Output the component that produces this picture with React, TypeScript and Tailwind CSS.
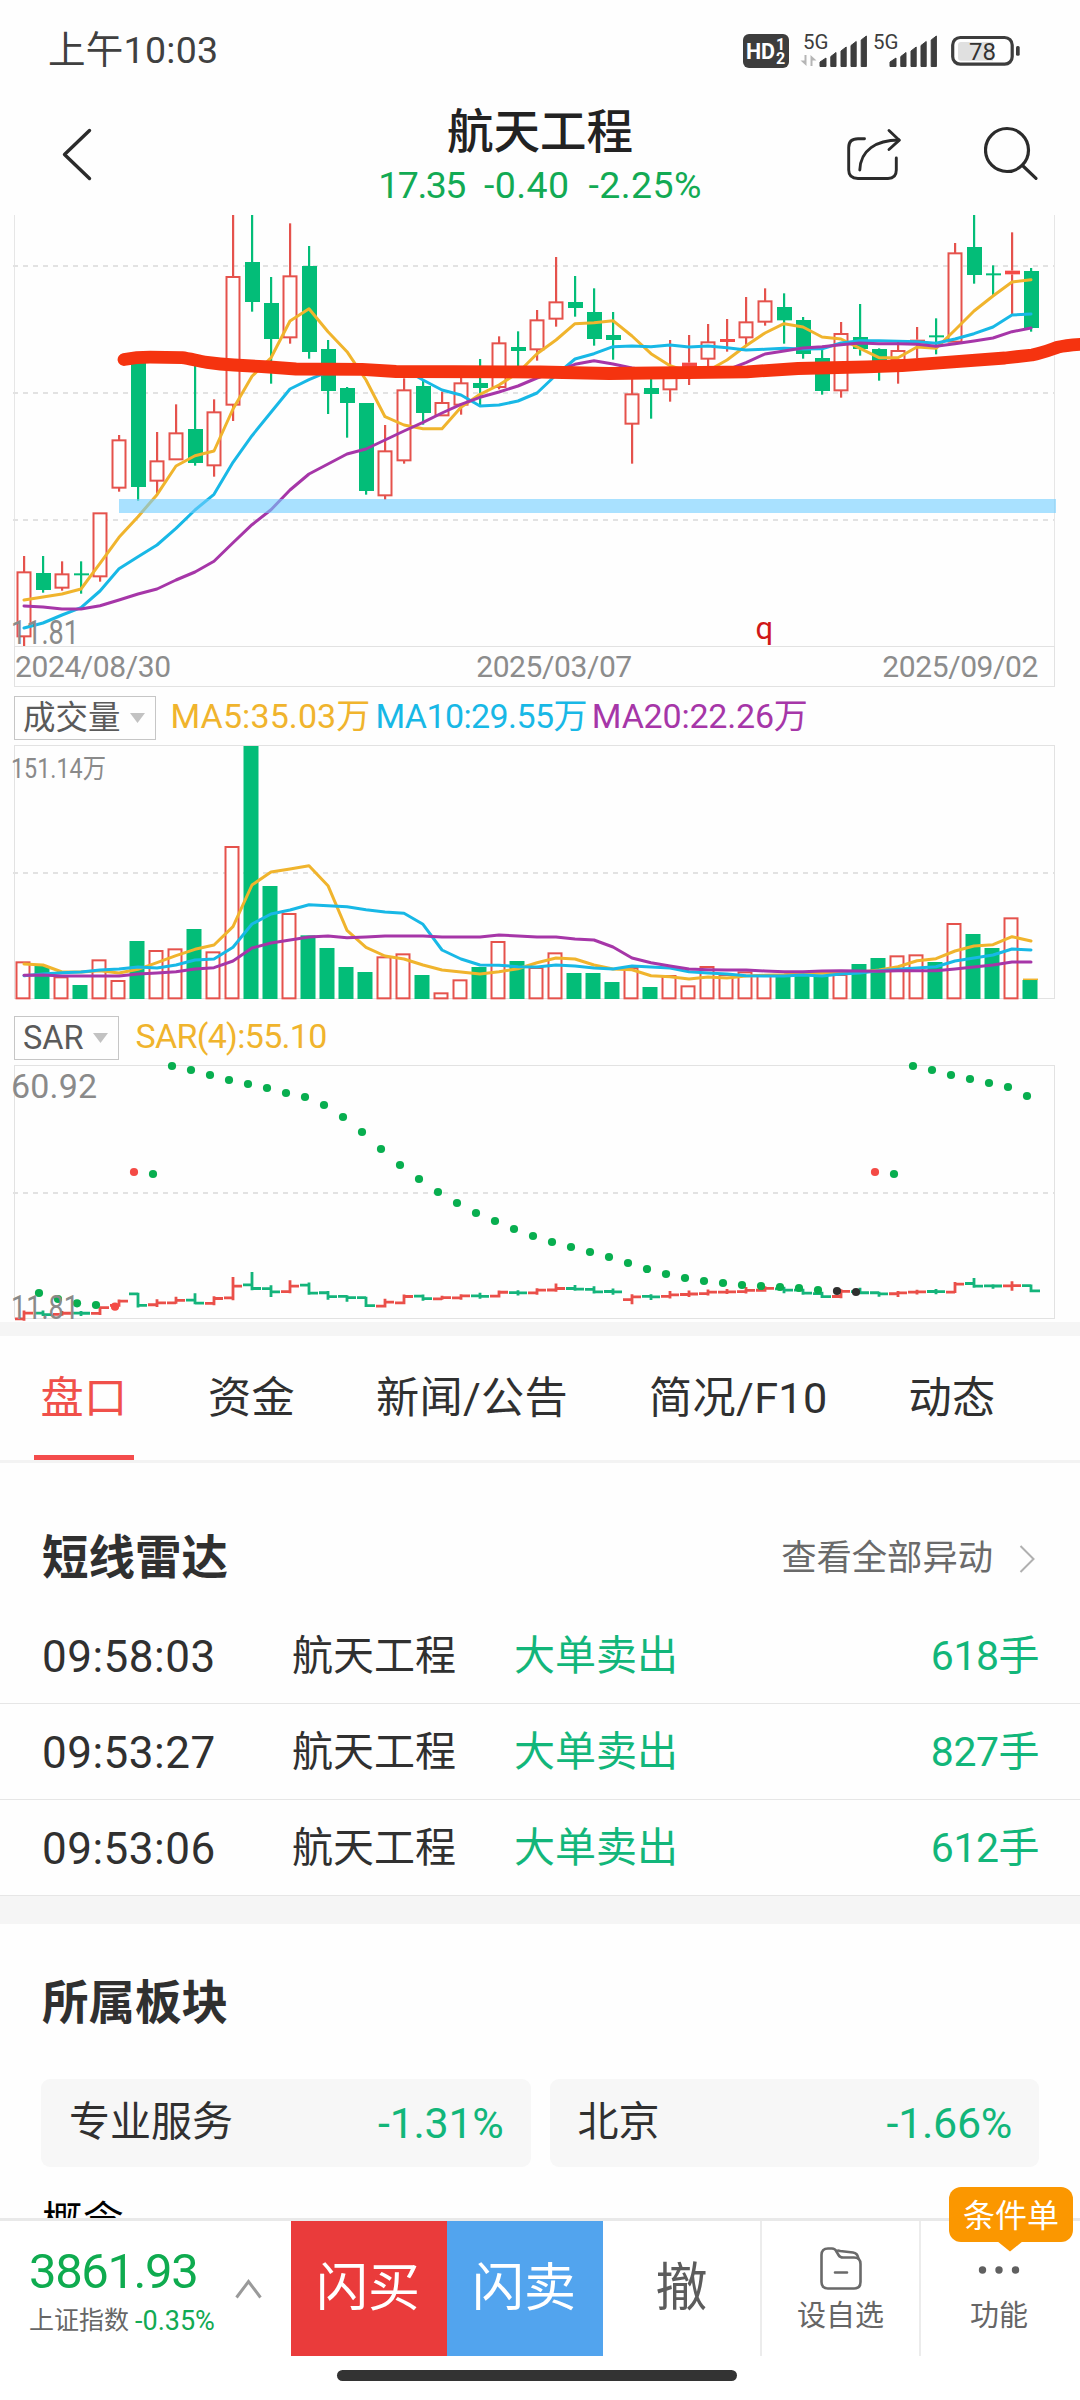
type Dir = "u" | "d";
type Candle = [Dir, number, number, number, number];

const UP = "#e5524c";
const DOWN = "#03bd78";
const YELLOW = "#f0b42d";
const BLUE = "#18b8e6";
const PURPLE = "#a636a8";

const STEP = 19;
const cx = (i: number) => 24 + STEP * i;

// chart values are stored in thirds of a pixel
const py = (v: number) => v / 3;

// direction, high, body top, body bottom, low
const candles: Candle[] = [
  ["u", 1053, 1102, 1294, 1325], ["d", 1053, 1104, 1155, 1163], ["u", 1069, 1108, 1148, 1157],
  ["d", 1069, 1105, 1109, 1166], ["u", 925, 925, 1114, 1130], ["u", 690, 706, 848, 860],
  ["d", 465, 470, 846, 887], ["u", 681, 769, 827, 865], ["u", 598, 685, 763, 763],
  ["d", 480, 672, 774, 782], ["u", 583, 622, 781, 815], ["u", -55, 216, 599, 648],
  ["d", -220, 171, 291, 320], ["d", 216, 294, 402, 536], ["u", 55, 214, 397, 416],
  ["d", 123, 183, 441, 461], ["d", 405, 432, 558, 627], ["d", 546, 549, 594, 698],
  ["d", 594, 594, 858, 869], ["u", 660, 739, 871, 884], ["u", 520, 556, 766, 776],
  ["d", 525, 543, 624, 659], ["u", 560, 594, 631, 631], ["u", 515, 535, 599, 629],
  ["d", 462, 534, 549, 600], ["u", 394, 415, 546, 553], ["d", 379, 426, 438, 490],
  ["u", 315, 346, 433, 467], ["u", 156, 292, 341, 365], ["d", 213, 291, 309, 335],
  ["d", 250, 321, 402, 422], ["d", 321, 390, 405, 464], ["u", 515, 568, 656, 776],
  ["d", 515, 549, 567, 641], ["u", 405, 500, 553, 590], ["u", 390, 473, 490, 540],
  ["u", 357, 412, 461, 490], ["u", 342, 402, 411, 440], ["u", 276, 352, 397, 420],
  ["u", 250, 289, 350, 362], ["d", 265, 306, 346, 416], ["d", 336, 345, 447, 461],
  ["d", 433, 459, 558, 569], ["u", 351, 387, 556, 578], ["d", 297, 396, 432, 452],
  ["d", 430, 432, 470, 527], ["u", 405, 438, 465, 536], ["u", 366, 404, 410, 460],
  ["d", 340, 391, 395, 448], ["u", 114, 145, 410, 410], ["d", -22, 126, 210, 236],
  ["d", 181, 205, 209, 270], ["u", 82, 197, 208, 330], ["d", 189, 198, 369, 380],
];

const ma5 = [
  1185, 1176, 1167, 1152, 1075, 997, 935, 869, 783, 752, 738, 612, 514, 458, 348, 311, 380, 440,
  525, 635, 660, 671, 671, 607, 568, 540, 503, 446, 405, 356, 353, 347, 393, 446, 482, 500, 497,
  465, 422, 384, 356, 366, 396, 402, 430, 458, 458, 426, 430, 375, 318, 273, 231, 224,
];
const ma10 = [
  1269, 1254, 1230, 1208, 1158, 1091, 1055, 1020, 970, 915, 868, 772, 692, 622, 552, 524, 500, 492,
  484, 485, 492, 525, 555, 570, 603, 600, 588, 564, 510, 462, 446, 425, 423, 425, 420, 426, 423,
  428, 435, 433, 430, 432, 431, 414, 407, 407, 409, 410, 415, 402, 386, 366, 330, 327,
];
const ma20 = [
  1203, 1206, 1212, 1212, 1202, 1185, 1167, 1152, 1125, 1101, 1069, 1013, 959, 914, 855, 807, 777,
  747, 732, 705, 678, 652, 624, 598, 577, 561, 543, 519, 500, 478, 467, 477, 489, 497, 503, 505,
  503, 495, 473, 447, 438, 429, 425, 419, 414, 416, 416, 418, 424, 416, 408, 399, 380, 369,
];

const volumes = [
  667, 678, 712, 735, 661, 723, 603, 633, 628, 567, 637, 321, 18, 438, 522, 586, 624, 681, 696, 652,
  643, 705, 760, 721, 681, 606, 663, 684, 640, 699, 699, 726, 684, 741, 708, 739, 681, 705, 697, 705,
  708, 708, 708, 705, 672, 654, 649, 646, 666, 552, 582, 624, 535, 720,
];
const vma5 = [
  672, 675, 696, 696, 692, 699, 688, 668, 647, 628, 615, 560, 435, 396, 387, 377, 437, 571, 622,
  648, 657, 675, 690, 696, 702, 695, 686, 668, 654, 657, 675, 687, 689, 707, 710, 717, 711, 714,
  708, 706, 704, 700, 700, 697, 697, 690, 680, 662, 656, 633, 618, 614, 590, 603,
];
const vma10 = [
  707, 702, 698, 696, 690, 687, 681, 684, 675, 660, 657, 622, 552, 522, 510, 494, 497, 500, 509,
  516, 520, 553, 630, 657, 675, 676, 680, 681, 675, 678, 684, 687, 678, 681, 684, 695, 699, 702,
  707, 708, 708, 705, 708, 702, 699, 692, 688, 684, 680, 663, 654, 645, 627, 630,
];
const vma20 = [
  706, 705, 708, 708, 708, 708, 702, 699, 695, 687, 683, 663, 624, 609, 600, 591, 588, 593, 591,
  588, 588, 588, 591, 591, 591, 585, 588, 591, 591, 597, 600, 621, 654, 668, 678, 687, 689, 690,
  690, 693, 695, 695, 693, 692, 693, 694, 692, 692, 692, 687, 681, 675, 666, 666,
];

const sar = [
  849, 867, 880, 885, 890, 486, 492, 168, 180, 195, 210, 222, 234, 249, 261, 285, 321, 366, 417,
  465, 507, 546, 579, 609, 633, 657, 678, 696, 711, 726, 741, 759, 777, 792, 804, 813, 819, 825,
  828, 831, 834, 840, 843, 846, 486, 492, 168, 180, 195, 207, 219, 231, 258,
];

const sarColor = (i: number) => {
  if (i === 5 || i === 6 || i === 45) return "#f44a45";
  if (i === 43 || i === 44) return "#2f2f2f";
  return "#08ae4f";
};

const line = (vals: number[]) => vals.map((v, i) => `${cx(i)},${py(v).toFixed(1)}`).join(" ");

function Averages({ sets }: { sets: number[][] }) {
  const colors = [YELLOW, BLUE, PURPLE];
  return (
    <g fill="none" strokeWidth="3" strokeLinejoin="round" strokeLinecap="round">
      {sets.map((s, i) => (
        <polyline key={i} points={line(s)} stroke={colors[i]} />
      ))}
    </g>
  );
}

function Dashed({ y }: { y: number }) {
  return <line x1="13" x2="1054" y1={y} y2={y} stroke="#e2e2e2" strokeWidth="2" strokeDasharray="5 5" />;
}

function PriceChart() {
  return (
    <svg className="block overflow-visible w-[1080px] h-[441px] shrink-0" viewBox="0 0 1080 441">
      <defs>
        <clipPath id="price-area">
          <rect x="0" y="10" width="1080" height="432" />
        </clipPath>
      </defs>
      <path d="M14.5 10V441M1054.5 10V441" stroke="#e6e6e6" />
      <Dashed y={61} />
      <Dashed y={188} />
      <Dashed y={315} />
      <g clipPath="url(#price-area)">
        {candles.map(([dir, hi, top, bot, lo], i) => {
          const x = cx(i);
          if (dir === "d") {
            return (
              <g key={i} fill={DOWN}>
                <rect x={x - 1} y={py(hi)} width="2.2" height={py(lo - hi)} />
                <rect x={x - 7} y={py(top)} width="15" height={Math.max(2, py(bot - top))} />
              </g>
            );
          }
          const small = bot - top < 18;
          return (
            <g key={i}>
              <rect x={x - 1} y={py(hi)} width="2.2" height={py(top - hi)} fill={UP} />
              <rect x={x - 1} y={py(bot)} width="2.2" height={py(lo - bot)} fill={UP} />
              {small ? (
                <rect x={x - 7} y={py(top)} width="15" height={py(bot - top)} fill="#f44a45" />
              ) : (
                <rect x={x - 6.5} y={py(top)} width="13" height={py(bot - top)} fill="#fff" stroke={UP} strokeWidth="2" />
              )}
            </g>
          );
        })}
      </g>
      <Averages sets={[ma5, ma10, ma20]} />
      <rect x="119" y="294" width="937" height="14" fill="#70cdff" opacity="0.6" />
      <path
        d="M124 154.5C132 153 142 152.2 150 152.2L182 152.6C190 153.5 198 156 207 157.3C216 158.6 225 159.5 234 160L269 162L296 164L362 164.3L396 166.5L540 167L609 168.5L747 166.8L798 163.5L867 161.8L902 160.7L953 156.8L1005 153L1032 150C1043 148 1051 144.5 1058 142.2C1066 140 1074 139.6 1086 139"
        fill="none"
        stroke="#f5330f"
        strokeWidth="12.8"
        strokeLinecap="round"
        strokeLinejoin="round"
      />
      <text x="11" y="439" fill="#8a8a8a" fontSize="33" textLength="68" lengthAdjust="spacingAndGlyphs">11.81</text>
      <text x="755.500" y="434" fill="#d01818" fontSize="31">q</text>
    </svg>
  );
}

function VolumeChart() {
  return (
    <svg className="block w-[1080px] h-[261px] shrink-0" viewBox="0 0 1080 261">
      <rect x="14.5" y="5.5" width="1040" height="253" fill="none" stroke="#e2e2e2" />
      <Dashed y={133} />
      {volumes.map((top, i) => {
        const x = cx(i);
        return candles[i][0] === "d" ? (
          <rect key={i} x={x - 8.5} y={py(top)} width="15" height={py(777 - top)} fill={DOWN} />
        ) : (
          <rect key={i} x={x - 7.5} y={py(top)} width="13" height={py(775 - top)} fill="#fff" stroke={UP} strokeWidth="2" />
        );
      })}
      <path d="M1023 239.3h15" stroke={YELLOW} strokeWidth="1.5" />
      <Averages sets={[vma5, vma10, vma20]} />
      <text x="11" y="37.5" fill="#8a8a8a" fontSize="27" textLength="95" lengthAdjust="spacingAndGlyphs">151.14万</text>
    </svg>
  );
}

function SarChart() {
  // price panel scale squeezed into the indicator's range
  const sy = (v: number) => py(827 + (v - 198) / 11);
  return (
    <svg className="block overflow-visible w-[1080px] h-[262px] shrink-0" viewBox="0 50 1080 262">
      <rect x="14.5" y="55.5" width="1040" height="253" fill="none" stroke="#e2e2e2" />
      <Dashed y={183} />
      {candles.map(([dir, hi, top, bot, lo], i) => {
        const open = sy(dir === "u" ? bot : top);
        const close = sy(dir === "u" ? top : bot);
        const x = cx(i);
        return (
          <path
            key={i}
            d={`M${x - 9} ${open}H${x}M${x} ${close}H${x + 9}M${x} ${sy(hi) - 1}V${sy(lo) + 1}`}
            stroke={dir === "u" ? "#ea4f49" : "#14b47b"}
            strokeWidth="2.8"
          />
        );
      })}
      {sar.map((v, i) => (
        <circle key={i} cx={39 + STEP * i} cy={py(v)} r="4.1" fill={sarColor(i + 1)} />
      ))}
      <text x="11" y="88" fill="#8a8a8a" fontSize="34" textLength="86">60.92</text>
      <text x="11" y="309" fill="#8a8a8a" fontSize="33" textLength="68" lengthAdjust="spacingAndGlyphs">11.81</text>
    </svg>
  );
}

const signalBars = [
  { x: 0, w: 7, h: 9 },
  { x: 10.8, w: 6.2, h: 14.5 },
  { x: 21, w: 6.2, h: 20 },
  { x: 31, w: 6.2, h: 25.5 },
  { x: 41.2, w: 6.2, h: 31 },
];

function Signal() {
  return (
    <g fill="#3d3d3d" stroke="#3d3d3d" strokeLinejoin="round">
      {signalBars.map(({ x, w, h }) => (
        <path key={x} d={`M${x + 0.5} 31V${31 - h + 4.5}L${x + w - 0.5} ${31 - h + 0.5}V31z`} />
      ))}
    </g>
  );
}

function StatusBar() {
  return (
    <div className="h-[102px] shrink-0 flex items-center justify-between pl-[48px] pr-[59px] text-[#404040]">
      <span className="text-[37.5px] leading-none tracking-[0.3px]">上午10:03</span>
      <svg className="overflow-visible w-[278px] h-[36px]" viewBox="743 33 278 36" fontFamily="Roboto">
        <rect x="743" y="34" width="46" height="34" rx="6" fill="#3d3d3d" />
        <text x="746" y="58.5" fill="#fff" fontSize="21.500" fontWeight="700" textLength="29">HD</text>
        <text x="776" y="50" fill="#fff" fontSize="16" fontWeight="700">1</text>
        <text x="776" y="64" fill="#fff" fontSize="16" fontWeight="700">2</text>
        <text x="803" y="49" fill="#3d3d3d" fontSize="20.5">5G</text>
        <path d="M806.500 55v11l-6-5.500h4V55zM810.500 66V55l6 5.500h-4V66z" fill="#b5b5b5" />
        <g transform="translate(819.5 35.5)"><Signal /></g>
        <text x="873" y="49" fill="#3d3d3d" fontSize="20.5">5G</text>
        <g transform="translate(889.5 35.5)"><Signal /></g>
        <rect x="952.7" y="37.500" width="59.500" height="26.700" rx="7.500" fill="#fff" stroke="#3d3d3d" strokeWidth="3.200" />
        <path d="M961 42H993V60.700H961a3 3 0 0 1-3-3V45a3 3 0 0 1 3-3z" fill="#e0e0e0" />
        <text x="982.500" y="60" fill="#333" fontSize="24" textAnchor="middle">78</text>
        <rect x="1016" y="46" width="3.700" height="9.700" rx="1.500" fill="#3d3d3d" />
      </svg>
    </div>
  );
}

function Header() {
  return (
    <header className="h-[103px] shrink-0 grid grid-cols-[1fr_auto_1fr] items-start">
      <svg className="ml-[60px] mt-[24px] w-[34px] h-[56px]" viewBox="60 126 34 56" fill="none" stroke="#2b2b2b" strokeWidth="3.4" strokeLinecap="round" strokeLinejoin="round">
        <path d="M89.5 130.500L64.500 154.500L89.500 178.500" />
      </svg>
      <div className="text-center">
        <h1 className="text-[46.5px] leading-[60px] font-medium text-[#222]">航天工程</h1>
        <div className="flex justify-center gap-[19px] text-[37.5px] leading-[46px] text-[#12aa54]">
          <span className="tracking-[-1.5px]">17.35</span>
          <span className="tracking-[0.4px]">-0.40</span>
          <span className="tracking-[0.4px]">-2.25%</span>
        </div>
      </div>
      <div className="flex justify-end gap-[82px] pr-[40px] pt-[24px]">
        <svg className="w-[56px] h-[56px]" viewBox="846 126 56 56" fill="none" stroke="#2b2b2b" strokeWidth="2.900" strokeLinecap="round" strokeLinejoin="round">
          <path d="M864.500 138.700H858Q848.700 138.700 848.700 147.500V170Q848.700 178.500 858 178.500H888Q896.300 178.500 896.300 170V158" />
          <path d="M859.800 170C860.500 150 876 140.200 899 140" />
          <path d="M889 130.500L899.300 140.200L889 149.500" />
        </svg>
        <svg className="w-[56px] h-[56px]" viewBox="984 126 56 56" fill="none" stroke="#2b2b2b" strokeWidth="3.200" strokeLinecap="round">
          <circle cx="1007" cy="150" r="21.500" />
          <path d="M1022.500 165.500L1036 178.300" />
        </svg>
      </div>
    </header>
  );
}

function Picker({ label }: { label: string }) {
  return (
    <div className="h-[44px] flex items-center gap-[9px] border border-[#c6c6c6] pl-[8px] pr-[10px] text-[#5a5a5a]">
      <span className="text-[32.5px] leading-[40px]">{label}</span>
      <svg className="w-[15px] h-[10px]" viewBox="0 0 15 10">
        <path d="M0 0H15L7.500 10z" fill="#c2c2c2" />
      </svg>
    </div>
  );
}

const tabs = ["盘口", "资金", "新闻/公告", "简况/F10", "动态"];

const radar = [
  { time: "09:58:03", lots: "618手" },
  { time: "09:53:27", lots: "827手" },
  { time: "09:53:06", lots: "612手" },
];

const sectors = [
  { name: "专业服务", change: "-1.31%" },
  { name: "北京", change: "-1.66%" },
];

function BottomBar() {
  return (
    <footer className="h-[182px] shrink-0 bg-white border-t-[3px] border-[#e9e9e9]">
      <div className="flex h-[135px]">
        <div className="w-[291px] flex items-center justify-between pl-[29px] pr-[29px]">
          <div className="pt-[8px] whitespace-nowrap">
            <div className="text-[49px] leading-[54px] tracking-[-1.4px] text-[#0fab4f]">3861.93</div>
            <div className="flex gap-[6px] text-[25px] leading-[38px] mt-[3px]">
              <span className="text-[#666]">上证指数</span>
              <span className="text-[#12aa54] text-[27px]">-0.35%</span>
            </div>
          </div>
          <svg className="-ml-[10px] w-[27px] h-[20px] shrink-0" viewBox="0 0 27 20" fill="none" stroke="#9a9a9a" strokeWidth="3">
            <path d="M1.500 18.500L13.500 2.500L25.500 18.500" />
          </svg>
        </div>
        <button className="w-[156px] bg-[#ea3b3b] text-white text-[52px] pr-[2px]">闪买</button>
        <button className="w-[156px] bg-[#52a4ee] text-white text-[52px] pr-[2px]">闪卖</button>
        <button className="w-[159px] border-r-2 border-[#ececec] text-[#5c5c5c] text-[52px]">撤</button>
        <div className="w-[159px] border-r-2 border-[#ececec] flex flex-col items-center pt-[26px] text-[#666]">
          <svg className="w-[42px] h-[43px]" viewBox="0 0 42 43" fill="none" stroke="#6a6a6a" strokeWidth="2.600" strokeLinejoin="round" strokeLinecap="round">
            <path d="M1.500 8Q1.500 1.500 8 1.500H12Q15 1.500 16.500 4.500L18.500 8Q20 10.500 23 10.500H34Q40.500 10.500 40.500 17V35Q40.500 41.500 34 41.500H8Q1.500 41.500 1.500 35z" />
            <path d="M16.500 4.500Q17.500 2.800 20 4L33 5.500Q37.500 6 38.500 11.500M15 25.500H27" />
          </svg>
          <span className="text-[29px] leading-[36px] mt-[8px]">设自选</span>
        </div>
        <div className="relative flex-1 flex flex-col items-center pt-[44px] pr-[3px] text-[#666]">
          <svg className="w-[42px] h-[10px]" viewBox="0 0 42 10" fill="#606060">
            <circle cx="4.500" cy="5" r="3.700" />
            <circle cx="21" cy="5" r="3.700" />
            <circle cx="37.500" cy="5" r="3.700" />
          </svg>
          <span className="text-[29px] leading-[36px] mt-[23px]">功能</span>
          <div className="absolute left-[28px] -top-[34px] w-[124px] h-[55px] rounded-[12px] bg-[#fb9700] text-white text-[32px] leading-[58px] text-center">
            条件单
            <svg className="absolute left-[48px] top-[54px] w-[26px] h-[11px]" viewBox="0 0 26 11">
              <path d="M0 0H26L13 10.500z" fill="#fb9700" />
            </svg>
          </div>
        </div>
      </div>
      <div className="mx-auto mt-[14px] w-[400px] h-[11px] -translate-x-[3px] rounded-full bg-[#333]" />
    </footer>
  );
}

export default function App() {
  return (
    <div className="w-[1080px] h-[2400px] flex flex-col overflow-hidden bg-[#fefefe] font-[Roboto,'Noto_Sans_CJK_SC',sans-serif]">
      <StatusBar />
      <Header />
      <PriceChart />

      <div className="mx-[14px] w-[1041px] h-[41px] shrink-0 flex items-center justify-between border border-[#e2e2e2] pr-[16px] text-[30px] leading-[38px] tracking-[-0.4px] text-[#8c8c8c]">
        <span>2024/08/30</span>
        <span className="ml-[55px]">2025/03/07</span>
        <span>2025/09/02</span>
      </div>
      <div className="h-[53px] shrink-0 flex items-end pl-[14px]">
        <Picker label="成交量" />
        <div className="flex items-center gap-[5px] h-[48px] ml-[15px] text-[34px] tracking-[0.1px]">
          <span className="text-[#f0b42d]">MA5:35.03万</span>
          <span className="text-[#18b8e6] tracking-[-0.6px]">MA10:29.55万</span>
          <span className="text-[#a636a8] tracking-[-0.2px]">MA20:22.26万</span>
        </div>
      </div>
      <VolumeChart />

      <div className="h-[59px] shrink-0 flex items-end pl-[14px]">
        <Picker label="SAR" />
        <span className="ml-[17px] text-[34px] leading-[47px] tracking-[-0.7px] text-[#f0b42d]">SAR(4):55.10</span>
      </div>
      <SarChart />

      <div className="h-[14px] shrink-0 bg-[#f5f5f5]" />
      <nav className="h-[127px] shrink-0 flex border-b-[3px] border-[#f3f3f3] pl-[34px] text-[43.2px] leading-[125px] tracking-[0.3px] text-[#303030]">
        {tabs.map((tab, i) => (
          <div
            key={tab}
            className={
              i === 0
                ? "mr-[68px] px-[6.5px] border-b-[5px] border-[#f44c4c] text-[#f0504a]"
                : "mr-[69px] px-[6px]"
            }
          >
            {tab}
          </div>
        ))}
      </nav>

      <section className="shrink-0">
        <div className="h-[145px] flex items-center justify-between pl-[42px] pr-[45px] pt-[46px]">
          <h2 className="text-[46.5px] leading-[99px] font-bold text-[#303030]">短线雷达</h2>
          <div className="flex items-center gap-[26px] text-[35.3px] text-[#6a6a6a]">
            查看全部异动
            <svg className="w-[16px] h-[28px]" viewBox="0 0 16 28" fill="none" stroke="#b0b0b0" strokeWidth="2">
              <path d="M1.500 1L14.500 14L1.500 27" />
            </svg>
          </div>
        </div>
        {radar.map((row) => (
          <div key={row.time} className="h-[96px] flex items-center border-b border-[#e6e6e6] pl-[42px] pr-[41px] pt-[2px] text-[41px] text-[#303030]">
            <span className="w-[250px] text-[44px] tracking-[0.5px]">{row.time}</span>
            <span className="w-[222px]">航天工程</span>
            <span className="text-[#12b67a]">大单卖出</span>
            <span className="ml-auto tracking-[-0.5px] text-[#12b67a]">{row.lots}</span>
          </div>
        ))}
      </section>

      <div className="h-[28px] shrink-0 bg-[#f5f5f5]" />
      <section className="flex-1 min-h-0 overflow-hidden pl-[41px] pr-[41px]">
        <h2 className="pl-px pt-[48px] text-[46.5px] leading-[62px] font-bold text-[#303030]">所属板块</h2>
        <div className="mt-[45px] grid grid-cols-2 gap-[19px]">
          {sectors.map((s) => (
            <div key={s.name} className="h-[88px] flex items-center justify-between rounded-[9px] bg-[#f7f7f7] pl-[28px] pr-[27px] text-[41px] text-[#303030]">
              <span>{s.name}</span>
              <span className="text-[43px] tracking-[-0.3px] text-[#12b67a]">{s.change}</span>
            </div>
          ))}
        </div>
        <p className="pl-px mt-[25px] text-[41px] leading-[60px] text-black">概念</p>
      </section>

      <BottomBar />
    </div>
  );
}
